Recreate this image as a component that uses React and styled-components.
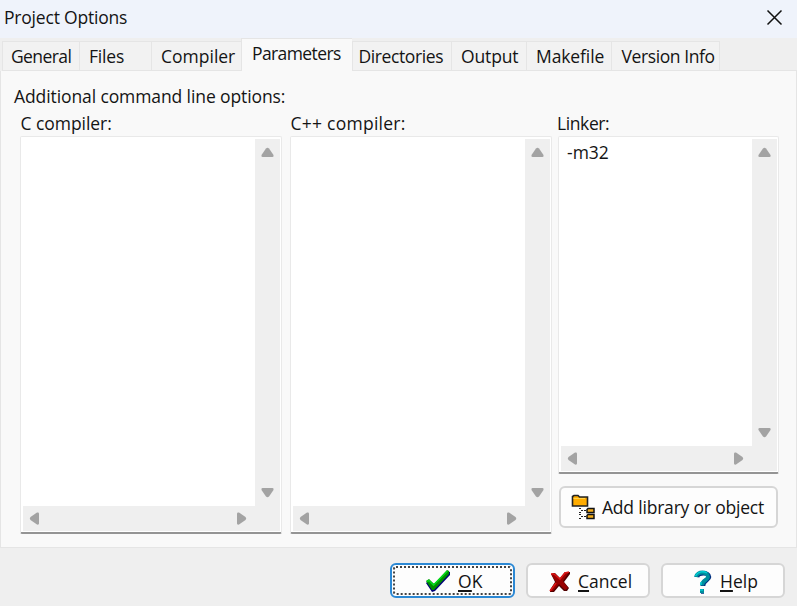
import React from 'react';
import styled, { createGlobalStyle } from 'styled-components';

const GlobalStyle = createGlobalStyle`
  * { box-sizing: border-box; }
  body { margin: 0; background: #efefef; }
`;

const Dialog = styled.main`
  display: flex;
  flex-direction: column;
  width: 797px;
  height: 606px;
  overflow: hidden;
  background: #efefef;
  color: #141414;
  font: 17.5px/24px "Open Sans", "Noto Sans", sans-serif;
`;

const TitleBar = styled.header`
  display: flex;
  flex: none;
  align-items: flex-start;
  justify-content: space-between;
  height: 38px;
  padding: 5px 14px 0 4px;
  background: #eff3fb;
`;

const Text = styled.span`
  white-space: nowrap;
  letter-spacing: ${(p) => p.$track || 0}px;
`;

const CloseButton = styled.button`
  display: flex;
  margin-top: 4px;
  padding: 0;
  border: 0;
  background: none;
`;

const TabList = styled.nav`
  display: flex;
  flex: none;
  align-items: flex-end;
  height: 33px;
  padding-left: 2px;
`;

const Tab = styled.button`
  flex: none;
  width: ${(p) => p.$width}px;
  height: ${(p) => (p.$active ? 33 : 30)}px;
  margin: 0;
  padding: 0 0 ${(p) => (p.$active ? 4 : 1)}px ${(p) => p.$inset}px;
  border: 1px solid #e5e5e5;
  border-right-width: ${(p) => (p.$last ? 1 : 0)}px;
  border-bottom: ${(p) => (p.$active ? '0' : '1px solid #e5e5e5')};
  background: ${(p) => (p.$active ? '#f9f9f9' : '#f2f2f2')};
  color: inherit;
  font: inherit;
  text-align: left;
`;

const Page = styled.section`
  flex: none;
  height: 477px;
  padding: 13px 17px 0 13px;
  border: 1px solid #e5e5e5;
  border-top: 0;
  background: #f9f9f9;
`;

const TabEdge = styled.div`
  flex: 1;
  height: 1px;
  background: #e5e5e5;
`;

const Columns = styled.div`
  display: grid;
  grid-template-columns: 270px 268px 221px;
  padding: 3px 0 0 6px;
`;

const Column = styled.div`
  display: flex;
  flex-direction: column;
`;

const Caption = styled.label`
  height: 24px;
  margin-left: ${(p) => p.$shift || 0}px;
`;

const Memo = styled.div`
  display: grid;
  grid-template-columns: 1fr 25px;
  grid-template-rows: 1fr 25px;
  width: ${(p) => p.$width}px;
  height: ${(p) => p.$height}px;
  margin-top: 1px;
  padding: 2px 1px 1px 2px;
  border: 1px solid #e9e9e9;
  border-bottom: 2px solid #949494;
  border-radius: 2px;
  background: #fff;
`;

const MemoText = styled.div`
  padding: 1px 0 0 6px;
`;

const ScrollTrack = styled.div`
  display: flex;
  flex-direction: ${(p) => (p.$vertical ? 'column' : 'row')};
  align-items: center;
  justify-content: space-between;
  padding: ${(p) => (p.$vertical ? '8px 1px 8px 0' : '0 8px 0 6px')};
  background: #efefef;
`;

const Corner = styled.div`
  background: #efefef;
`;

const Button = styled.button`
  display: flex;
  flex: none;
  align-items: center;
  width: ${(p) => p.$width}px;
  height: ${(p) => p.$height}px;
  padding: 0 0 0 ${(p) => p.$inset}px;
  gap: ${(p) => p.$gap}px;
  border: ${(p) => (p.$focused ? '2px solid #2b88d4' : '2px solid #d6d6d6')};
  border-radius: 6px;
  background: #fdfdfd;
  color: inherit;
  font: inherit;
  outline: ${(p) => (p.$focused ? '2px dotted #444' : 'none')};
  outline-offset: -5px;
`;

const AddSlot = styled.div`
  padding: 12px 0 0 1px;
`;

const Footer = styled.footer`
  display: flex;
  flex: 1;
  align-items: flex-start;
  justify-content: flex-end;
  gap: 11px;
  padding: 15px 12px 0 0;
`;

const AccessKey = styled.span`
  text-decoration: underline;
  text-decoration-thickness: 1.5px;
  text-underline-offset: 2px;
  text-decoration-skip-ink: none;
`;

const points = {
  up: 'M5 1.5Q6.5 0 8 1.5L12.5 8Q13 10 11.5 10H1.5Q0 10 .5 8Z',
  down: 'M5 8.5Q6.5 10 8 8.5L12.5 2Q13 0 11.5 0H1.5Q0 0 .5 2Z',
  left: 'M1.5 5Q0 6.5 1.5 8L8 12.5Q10 13 10 11.5V1.5Q10 0 8 .5Z',
  right: 'M8.5 5Q10 6.5 8.5 8L2 12.5Q0 13 0 11.5V1.5Q0 0 2 .5Z',
};

function Arrow({ dir }) {
  const tall = dir === 'left' || dir === 'right';
  return (
    <svg width={tall ? 10 : 13} height={tall ? 13 : 10}>
      <path d={points[dir]} fill="#a3a3a3" />
    </svg>
  );
}

function CloseIcon() {
  return (
    <svg width="17" height="17" viewBox="0 0 17 17">
      <path d="M1.5 1.5 15.5 15.5M15.5 1.5 1.5 15.5" stroke="#111" strokeWidth="1.5" />
    </svg>
  );
}

function CheckIcon() {
  return (
    <svg width="26" height="24" viewBox="0 0 26 24">
      <path d="M1 14 4 11 9 15 22 2 25 3V6L10 22 7 23Z" fill="#000078" />
      <path d="M1 12 4 10 9 15 22 1 24 2V5L9 21 7 21Z" fill="#008c00" />
      <path d="M2 12.5 4 11.5 8.5 16 22.5 2" fill="none" stroke="#00dc18" strokeWidth="1.6" />
    </svg>
  );
}

function CrossIcon() {
  return (
    <svg width="22" height="25" viewBox="0 0 22 25">
      <path d="M2 6 6 5 11 10 16 4 21 4V6L15 14 20 20 18 23 15 23 10 18 5 24 1 24V22L6 14Z" fill="#500000" />
      <path d="M2 6 5 5 11 11 16 4 20 4 14 13 19 20 16 22 10 16 4 23 1 23 7 14Z" fill="#980000" />
      <path d="M2 6 5 6 11 11 16 5 20 4M1 23 7 15" fill="none" stroke="#dc1616" strokeWidth="1.6" />
    </svg>
  );
}

function QuestionIcon() {
  return (
    <svg width="18" height="26" viewBox="0 0 18 26">
      <path d="M3 9C4 4 15 4 15 9C15 12 9 12 9 18M7 23.5H10" fill="none" stroke="#003080" strokeWidth="4.6" />
      <path d="M2 9C3 3 14 3 14 9C14 12 8 12 8 17.5M6 23H10" fill="none" stroke="#008e9d" strokeWidth="4" />
      <path d="M1.5 8C4 3 10 3 13 5M7 14V17M6 22H9" fill="none" stroke="#00cdd3" strokeWidth="1.5" />
    </svg>
  );
}

function LibraryIcon() {
  return (
    <svg width="25" height="26" viewBox="0 0 25 26">
      <path d="M1.5 12V2.5L3 1.5H7L8.5 3H16.5V12Z" fill="#ffac00" stroke="#222" strokeWidth="1.6" />
      <path d="M2.5 4.5H14" stroke="#ffd24a" />
      <path d="M8 14.5H10M8 18.5H10M10 16.5H12M13 16.5H15M8 20.5H10M8 24.5H10M10 22.5H12M13 22.5H15" stroke="#222" strokeWidth="1.2" />
      <path d="M16 18.5V15.5L17 14.5H23V18.5ZM16 24.5V21.5L17 20.5H23V24.5Z" fill="#f4ad18" stroke="#111" strokeWidth="1.5" />
    </svg>
  );
}

const tabs = [
  { name: 'General', width: 77, inset: 8, track: -0.6 },
  { name: 'Files', width: 72, inset: 9, track: -0.2 },
  { name: 'Compiler', width: 90, inset: 9, track: 0 },
  { name: 'Parameters', width: 111, inset: 10, track: -0.6 },
  { name: 'Directories', width: 99, inset: 5.5, track: -0.4 },
  { name: 'Output', width: 75, inset: 9, track: -0.15 },
  { name: 'Makefile', width: 85, inset: 9, track: -0.1 },
  { name: 'Version Info', width: 109, inset: 9.5, track: -0.4, last: true },
].map((t) => ({ ...t, active: t.name === 'Parameters' }));

const memos = [
  { caption: 'C compiler:', track: -0.05, width: 262, height: 398, shift: 0.5 },
  { caption: 'C++ compiler:', track: 0.25, width: 262, height: 398, shift: 0.5 },
  { caption: 'Linker:', track: -0.4, width: 221, height: 338, shift: -1, text: '-m32', addButton: true },
];

export default function App() {
  return (
    <Dialog>
      <GlobalStyle />
      <TitleBar>
        <Text $track={-0.2}>Project Options</Text>
        <CloseButton aria-label="Close"><CloseIcon /></CloseButton>
      </TitleBar>
      <TabList>
        {tabs.map((t) => (
          <Tab key={t.name} $width={t.width} $inset={t.inset} $active={t.active} $last={t.last}>
            <Text $track={t.track}>{t.name}</Text>
          </Tab>
        ))}
        <TabEdge />
      </TabList>
      <Page>
        <Text $track={-0.1}>Additional command line options:</Text>
        <Columns>
          {memos.map((m) => (
            <Column key={m.caption}>
              <Caption $shift={m.shift}><Text $track={m.track}>{m.caption}</Text></Caption>
              <Memo $width={m.width} $height={m.height}>
                <MemoText><Text>{m.text}</Text></MemoText>
                <ScrollTrack $vertical><Arrow dir="up" /><Arrow dir="down" /></ScrollTrack>
                <ScrollTrack><Arrow dir="left" /><Arrow dir="right" /></ScrollTrack>
                <Corner />
              </Memo>
              {m.addButton && (
                <AddSlot>
                  <Button $width={219} $height={42} $inset={10} $gap={6}>
                    <LibraryIcon />
                    <Text $track={-0.2}>Add library or object</Text>
                  </Button>
                </AddSlot>
              )}
            </Column>
          ))}
        </Columns>
      </Page>
      <Footer>
        <Button $width={125} $height={35} $inset={33} $gap={7} $focused>
          <CheckIcon />
          <Text $track={0.2}><AccessKey>O</AccessKey>K</Text>
        </Button>
        <Button $width={124} $height={35} $inset={21} $gap={7}>
          <CrossIcon />
          <Text><AccessKey>C</AccessKey>ancel</Text>
        </Button>
        <Button $width={124} $height={35} $inset={31} $gap={8}>
          <QuestionIcon />
          <Text><AccessKey>H</AccessKey>elp</Text>
        </Button>
      </Footer>
    </Dialog>
  );
}
